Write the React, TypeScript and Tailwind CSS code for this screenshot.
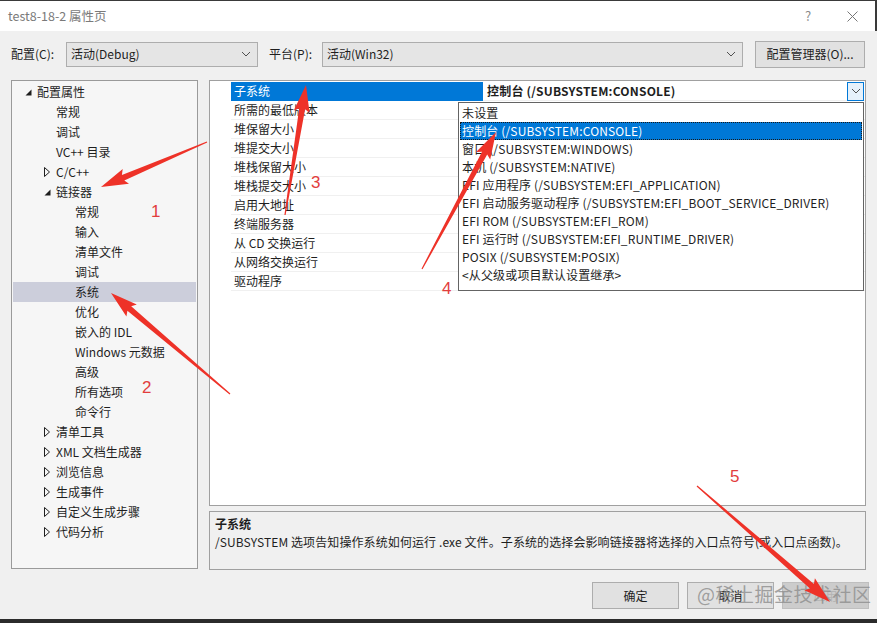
const tree: { level: number; label: string; toggle?: 'open' | 'closed' }[] = [
  { level: 0, label: '配置属性', toggle: 'open' },
  { level: 1, label: '常规' },
  { level: 1, label: '调试' },
  { level: 1, label: 'VC++ 目录' },
  { level: 1, label: 'C/C++', toggle: 'closed' },
  { level: 1, label: '链接器', toggle: 'open' },
  { level: 2, label: '常规' },
  { level: 2, label: '输入' },
  { level: 2, label: '清单文件' },
  { level: 2, label: '调试' },
  { level: 2, label: '系统' },
  { level: 2, label: '优化' },
  { level: 2, label: '嵌入的 IDL' },
  { level: 2, label: 'Windows 元数据' },
  { level: 2, label: '高级' },
  { level: 2, label: '所有选项' },
  { level: 2, label: '命令行' },
  { level: 1, label: '清单工具', toggle: 'closed' },
  { level: 1, label: 'XML 文档生成器', toggle: 'closed' },
  { level: 1, label: '浏览信息', toggle: 'closed' },
  { level: 1, label: '生成事件', toggle: 'closed' },
  { level: 1, label: '自定义生成步骤', toggle: 'closed' },
  { level: 1, label: '代码分析', toggle: 'closed' },
];

const props = [
  '子系统',
  '所需的最低版本',
  '堆保留大小',
  '堆提交大小',
  '堆栈保留大小',
  '堆栈提交大小',
  '启用大地址',
  '终端服务器',
  '从 CD 交换运行',
  '从网络交换运行',
  '驱动程序',
];

const options = [
  '未设置',
  '控制台 (/SUBSYSTEM:CONSOLE)',
  '窗口 (/SUBSYSTEM:WINDOWS)',
  '本机 (/SUBSYSTEM:NATIVE)',
  'EFI 应用程序 (/SUBSYSTEM:EFI_APPLICATION)',
  'EFI 启动服务驱动程序 (/SUBSYSTEM:EFI_BOOT_SERVICE_DRIVER)',
  'EFI ROM (/SUBSYSTEM:EFI_ROM)',
  'EFI 运行时 (/SUBSYSTEM:EFI_RUNTIME_DRIVER)',
  'POSIX (/SUBSYSTEM:POSIX)',
  '<从父级或项目默认设置继承>',
];

// red annotation arrows: tail -> tip
const arrows = [
  { x1: 207, y1: 141, x2: 101, y2: 186 },
  { x1: 230, y1: 393, x2: 111, y2: 292 },
  { x1: 285, y1: 214, x2: 306, y2: 84 },
  { x1: 422, y1: 268, x2: 496, y2: 131 },
  { x1: 697, y1: 485, x2: 830, y2: 601 },
];

const labels = [
  { n: '1', x: 151, y: 201 },
  { n: '2', x: 142, y: 377 },
  { n: '3', x: 311, y: 172 },
  { n: '4', x: 442, y: 278 },
  { n: '5', x: 730, y: 466 },
];

function arrowPoints(a: { x1: number; y1: number; x2: number; y2: number }) {
  const dx = a.x2 - a.x1;
  const dy = a.y2 - a.y1;
  const len = Math.hypot(dx, dy);
  const ux = dx / len;
  const uy = dy / len;
  const nx = -uy;
  const ny = ux;
  const headLen = 24;
  const bx = a.x2 - ux * headLen;
  const by = a.y2 - uy * headLen;
  const p = (x: number, y: number) => `${x.toFixed(1)},${y.toFixed(1)}`;
  return [
    p(a.x1 + nx * 0.6, a.y1 + ny * 0.6),
    p(bx + nx * 3, by + ny * 3),
    p(bx + nx * 8 - ux * 3, by + ny * 8 - uy * 3),
    p(a.x2, a.y2),
    p(bx - nx * 8 - ux * 3, by - ny * 8 - uy * 3),
    p(bx - nx * 3, by - ny * 3),
    p(a.x1 - nx * 0.6, a.y1 - ny * 0.6),
  ].join(' ');
}

const Chevron = () => (
  <svg width="10" height="6" viewBox="0 0 10 6">
    <path d="M1 1 L5 5 L9 1" fill="none" stroke="#505050" strokeWidth="1" />
  </svg>
);

const Toggle = ({ kind }: { kind: 'open' | 'closed' }) =>
  kind === 'open' ? (
    <svg width="7" height="7" viewBox="0 0 7 7">
      <path d="M6.5 0.5 L6.5 6.5 L0.5 6.5 Z" fill="#1e1e1e" />
    </svg>
  ) : (
    <svg width="6" height="10" viewBox="0 0 6 10">
      <path d="M0.5 0.5 L5.5 5 L0.5 9.5 Z" fill="none" stroke="#1e1e1e" strokeWidth="1" />
    </svg>
  );

export default function App() {
  return (
    <div className="relative w-[877px] h-[623px] overflow-hidden bg-[#f0f0f0] flex flex-col font-['Noto_Sans_CJK_SC',sans-serif] text-[12px] text-[#1e1e1e] border-t border-[#3a3a3a]">
      {/* title bar */}
      <div className="h-[30px] bg-white flex items-center pl-[8px] border-r-2 border-[#3a3a3a]">
        <span className="text-[#7a7a7a] text-[12.5px]">test8-18-2 属性页</span>
        <div className="ml-auto flex items-center">
          <span className="w-[20px] text-center text-[#8a8a8a] text-[13px]">?</span>
          <span className="w-[46px] flex justify-center ml-[11px]">
            <svg width="11" height="11" viewBox="0 0 11 11">
              <path d="M0.5 0.5 L10.5 10.5 M10.5 0.5 L0.5 10.5" stroke="#777" strokeWidth="1" />
            </svg>
          </span>
        </div>
      </div>

      {/* toolbar */}
      <div className="h-[49px] flex items-center pl-[11px] pr-[12px] pb-[3px]">
        <span className="w-[55px]">配置(C):</span>
        <div className="w-[192px] h-[25px] bg-[#e5e5e5] border border-[#adadad] flex items-center pl-[4px] pr-[6px]">
          <span>活动(Debug)</span>
          <span className="ml-auto"><Chevron /></span>
        </div>
        <span className="ml-[11px] w-[53px]">平台(P):</span>
        <div className="w-[421px] h-[25px] bg-[#e5e5e5] border border-[#adadad] flex items-center pl-[4px] pr-[6px]">
          <span>活动(Win32)</span>
          <span className="ml-auto"><Chevron /></span>
        </div>
        <div className="ml-auto w-[110px] h-[27px] bg-[#e1e1e1] border border-[#adadad] flex items-center justify-center">
          配置管理器(O)...
        </div>
      </div>

      {/* main */}
      <div className="flex px-[11px] gap-[11px]">
        {/* tree */}
        <div className="w-[187px] h-[489px] bg-[#f6f6f6] border border-[#9a9a9a] p-px">
          {tree.map((t, i) => (
            <div
              key={i}
              className={`h-[20px] flex items-center ${i === 10 ? 'bg-[#cccedb]' : ''}`}
            >
              <span
                className="w-[10px] flex justify-center"
                style={{ marginLeft: 10 + t.level * 19 }}
              >
                {t.toggle && <Toggle kind={t.toggle} />}
              </span>
              <span className="ml-[4px] leading-none">{t.label}</span>
            </div>
          ))}
        </div>

        {/* right column */}
        <div className="flex-1 flex flex-col gap-[5px]">
          <div className="h-[426px] bg-white border border-[#a0a0a0] pt-px">
            {props.map((p, i) => (
              <div key={i} className="h-[19px] flex">
                <div className="w-[21px]" />
                <div
                  className={`w-[252px] flex items-center pl-[3px] border-b ${
                    i === 0 ? 'bg-[#0078d7] text-white border-[#0078d7]' : 'border-[#f0f0f0]'
                  }`}
                >
                  {p}
                </div>
                <div className="flex-1 flex items-center border-b border-[#f0f0f0]">
                  {i === 0 && (
                    <>
                      <span className="pl-[4px] font-bold tracking-[0.2px]">控制台 (/SUBSYSTEM:CONSOLE)</span>
                      <span className="ml-auto mr-[1px] w-[17px] h-[19px] border border-[#0078d7] bg-[#e5f1fb] flex items-center justify-center">
                        <Chevron />
                      </span>
                    </>
                  )}
                </div>
              </div>
            ))}
          </div>
          <div className="h-[59px] border border-[#a0a0a0] bg-[#f0f0f0] px-[5px] pt-[3px] leading-[18px]">
            <div className="font-bold">子系统</div>
            <div className="tracking-[0.1px]">/SUBSYSTEM 选项告知操作系统如何运行 .exe 文件。子系统的选择会影响链接器将选择的入口点符号(或入口点函数)。</div>
          </div>
        </div>
      </div>

      {/* buttons */}
      <div className="flex justify-end gap-[8px] pr-[8px] mt-[12px]">
        <div className="w-[87px] h-[27px] bg-[#e1e1e1] border border-[#adadad] flex items-center justify-center">确定</div>
        <div className="w-[87px] h-[27px] bg-[#e1e1e1] border border-[#adadad] flex items-center justify-center">取消</div>
        <div className="w-[87px] h-[27px] bg-[#cccccc] border border-[#bfbfbf] flex items-center justify-center text-[#b4b4b4]">应用</div>
      </div>
      <div className="mt-auto h-[4px] bg-[#2b2b2b]" />

      {/* open dropdown list */}
      <div className="absolute left-[458px] top-[101px] w-[406px] h-[189px] bg-white border border-[#646464] pt-px px-px">
        {options.map((o, i) => (
          <div
            key={i}
            className={`h-[18px] flex items-center pl-[2px] whitespace-nowrap tracking-[0.15px] ${
              i === 1 ? 'bg-[#0078d7] text-white outline-1 outline-dotted outline-[#1a1a1a] -outline-offset-1' : ''
            }`}
          >
            {o}
          </div>
        ))}
      </div>

      {/* watermark */}
      <div className="absolute left-[697px] top-[579px] text-[19px] text-[#8c8c8c]/80 tracking-[0.5px] whitespace-nowrap">
        @稀土掘金技术社区
      </div>

      {/* annotations */}
      <svg className="absolute left-0 top-0 pointer-events-none" width="877" height="623">
        {arrows.map((a, i) => (
          <polygon key={i} points={arrowPoints(a)} fill="#ee3228" />
        ))}
      </svg>
      {labels.map((l) => (
        <span
          key={l.n}
          className="absolute text-[17px] leading-[20px] text-[#e23d3d] font-['Liberation_Sans',sans-serif]"
          style={{ left: l.x, top: l.y }}
        >
          {l.n}
        </span>
      ))}
    </div>
  );
}
